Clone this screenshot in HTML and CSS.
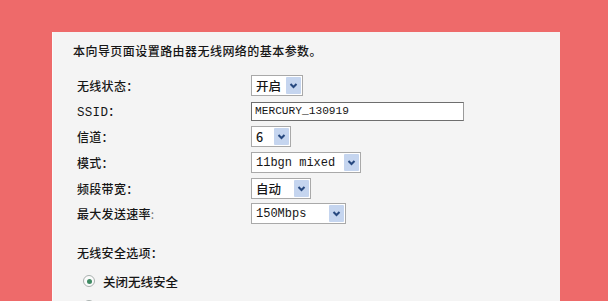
FILE: index.html
```html
<!DOCTYPE html>
<html lang="zh-CN">
<head>
    <meta charset="UTF-8">
    <title>无线设置</title>
    <link rel="stylesheet" href="styles.css">
</head>
<body>

<div class="painel">
    <p class="intro">本向导页面设置路由器无线网络的基本参数。</p>

    <div class="form">
        <div class="linha">
            <span class="rotulo">无线状态：</span>
            <div class="select" style="width: 52px;"><span class="valor cjk">开启</span><span class="seta"></span></div>
        </div>
        <div class="linha">
            <span class="rotulo"><span class="latino">SSID</span>：</span>
            <div class="campo" style="width: 213px;">MERCURY_130919</div>
        </div>
        <div class="linha">
            <span class="rotulo">信道：</span>
            <div class="select" style="width: 40px;"><span class="valor cjk">6</span><span class="seta"></span></div>
        </div>
        <div class="linha">
            <span class="rotulo">模式：</span>
            <div class="select" style="width: 110px;"><span class="valor">11bgn mixed</span><span class="seta"></span></div>
        </div>
        <div class="linha">
            <span class="rotulo">频段带宽：</span>
            <div class="select" style="width: 60px;"><span class="valor cjk">自动</span><span class="seta"></span></div>
        </div>
        <div class="linha">
            <span class="rotulo">最大发送速率<span class="dois-pontos">:</span></span>
            <div class="select" style="width: 95px;"><span class="valor">150Mbps</span><span class="seta"></span></div>
        </div>
    </div>

    <p class="secao">无线安全选项：</p>

    <label class="opcao primeira">
        <span class="radio marcado"></span>
        <span>关闭无线安全</span>
    </label>
    <label class="opcao">
        <span class="radio"></span>
        <span>WPA-PSK/WPA2-PSK</span>
    </label>
</div>

</body>
</html>
```

FILE: styles.css
```css
body {
    margin: 0;
    padding: 0;
    height: 301px;
    overflow: hidden;
    background-color: #ee6a6a;
    font-family: "Noto Sans CJK SC", "Noto Sans", sans-serif;
    color: #161616;
}
.painel {
    margin: 32px 0 0 52px;
    width: 508px;
    height: 269px;
    overflow: hidden;
    box-sizing: border-box;
    padding: 10px 20px 0 20px;
    background-color: #f4f4f4;
    border-left: 1px solid #fbfbfb;
}
.intro {
    margin: 0;
    font-size: 12px;
    line-height: 18px;
    letter-spacing: 0.45px;
    font-weight: 500;
}
.form {
    margin-top: 13px;
    padding-left: 4px;
}
.linha {
    display: flex;
    align-items: center;
    height: 25.6px;
}
.rotulo {
    width: 174px;
    flex-shrink: 0;
    font-size: 12px;
    letter-spacing: 0.3px;
    font-weight: 500;
}
.latino {
    font-family: "Liberation Mono", monospace;
    font-size: 12.5px;
    font-weight: 400;
}
.dois-pontos {
    color: #777;
    font-weight: 400;
}
.select {
    display: flex;
    align-items: center;
    justify-content: space-between;
    height: 21px;
    box-sizing: border-box;
    border: 1px solid #a9a9a9;
    background-color: #fff;
}
.valor {
    padding-left: 4px;
    font-family: "Liberation Mono", monospace;
    font-size: 12px;
    white-space: nowrap;
}
.valor.cjk {
    font-family: "Noto Sans CJK SC", sans-serif;
    font-size: 12.5px;
    font-weight: 500;
}
.seta {
    width: 15px;
    height: 17px;
    margin-right: 1px;
    background-color: #c5d5ef;
    border-radius: 1px;
    background-image: url("data:image/svg+xml;utf8,<svg xmlns='http://www.w3.org/2000/svg' width='15' height='17'><path d='M4.5 7 L7.5 10 L10.5 7' fill='none' stroke='%2326487f' stroke-width='2'/></svg>");
    background-repeat: no-repeat;
}
.campo {
    height: 19px;
    box-sizing: border-box;
    border: 1px solid #6e6e6e;
    border-right-color: #9a9a9a;
    background-color: #fff;
    padding-left: 3px;
    font-family: "Liberation Mono", monospace;
    font-size: 11.2px;
    line-height: 17px;
}
.secao {
    margin: 16px 0 0 4px;
    font-size: 12px;
    line-height: 20px;
    letter-spacing: 0.3px;
    font-weight: 500;
}
.opcao {
    display: flex;
    align-items: center;
    gap: 8px;
    height: 25px;
    margin-left: 10px;
    font-size: 12.5px;
    font-weight: 500;
}
.opcao.primeira {
    margin-top: 6px;
}
.radio {
    width: 10px;
    height: 10px;
    border: 1px solid #a8b0ae;
    border-radius: 50%;
    background-color: #fbfbfb;
    display: flex;
    align-items: center;
    justify-content: center;
}
.radio.marcado::after {
    content: "";
    width: 5px;
    height: 5px;
    border-radius: 50%;
    background-color: #3f8a63;
}
```
